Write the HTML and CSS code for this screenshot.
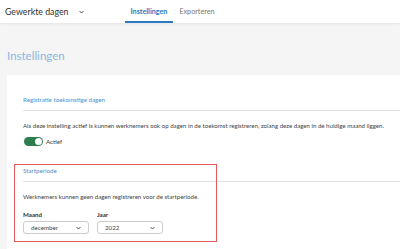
FILE: index.html
```html
<!DOCTYPE html>
<html>

<head>
  <meta charset="UTF-8">
  <title>Gewerkte dagen - Instellingen</title>
  <link rel="stylesheet" href="styles.css">
</head>

<body>
  <div class="topbar">
    <div class="app-title">
      Gewerkte dagen
      <svg class="chevron" viewBox="0 0 10 6" width="5" height="4"><path d="M1 1 L5 5 L9 1" fill="none" stroke="#444" stroke-width="1.8"/></svg>
    </div>
    <div class="tabs">
      <a class="tab active">Instellingen</a>
      <a class="tab">Exporteren</a>
    </div>
  </div>

  <div class="page">
    <h1 class="page-title">Instellingen</h1>

    <div class="card">
      <div class="setting">
        <h2 class="setting-title">Registratie toekomstige dagen</h2>
        <p class="setting-text">Als deze instelling actief is kunnen werknemers ook op dagen in de toekomst registreren, zolang deze dagen in de huidige maand liggen.</p>
        <div class="toggle-row">
          <span class="toggle"><span class="knob"></span></span>
          <span class="toggle-label">Actief</span>
        </div>
      </div>

      <div class="setting marked">
        <div class="highlight"></div>
        <h2 class="setting-title">Startperiode</h2>
        <p class="setting-text">Werknemers kunnen geen dagen registreren voor de startperiode.</p>
        <div class="fields">
          <div class="field">
            <label for="maand">Maand</label>
            <div class="select" id="maand">december
              <svg viewBox="0 0 10 6" width="5" height="4"><path d="M1 1 L5 5 L9 1" fill="none" stroke="#444" stroke-width="1.8"/></svg>
            </div>
          </div>
          <div class="field">
            <label for="jaar">Jaar</label>
            <div class="select" id="jaar">2022
              <svg viewBox="0 0 10 6" width="5" height="4"><path d="M1 1 L5 5 L9 1" fill="none" stroke="#444" stroke-width="1.8"/></svg>
            </div>
          </div>
        </div>
      </div>
    </div>
  </div>
</body>
</html>
```

FILE: styles.css
```css
body {
  margin: 0;
  font-family: Lato, "Open Sans", sans-serif;
  background-color: #f5f5f5;
  color: #444;
  overflow: hidden;
  height: 249px;
  display: flex;
  flex-direction: column;
}

.topbar {
  display: flex;
  align-items: center;
  flex-shrink: 0;
  height: 23px;
  background-color: #fff;
  box-shadow: 0 1px 3px rgba(0, 0, 0, 0.07);
  position: relative;
}

.app-title {
  display: flex;
  align-items: center;
  gap: 10px;
  padding-left: 5px;
  font-size: 8.8px;
  color: #333;
}

.tabs {
  display: flex;
  margin-left: 41px;
  height: 100%;
}

.tab {
  display: flex;
  align-items: center;
  padding: 2px 6px 0;
  font-size: 7.2px;
  color: #777;
  border-bottom: 2px solid transparent;
  box-sizing: border-box;
}

.tab.active {
  color: #2a7bc4;
  font-weight: bold;
  border-bottom-color: #2a7bc4;
}

.page {
  flex: 1;
  display: flex;
  flex-direction: column;
  padding-left: 7px;
  min-height: 0;
}

.page-title {
  margin: 0;
  padding-top: 26px;
  padding-bottom: 12px;
  font-size: 11.5px;
  font-weight: normal;
  color: #8ab5e0;
  line-height: 14px;
}

.card {
  flex: 1;
  background-color: #fff;
  padding: 21px 0 0 16px;
  overflow: hidden;
}

.setting {
  position: relative;
}

.setting-title {
  margin: 0;
  padding-bottom: 6px;
  font-size: 6.2px;
  line-height: 8px;
  font-weight: normal;
  color: #4a8fd0;
  border-bottom: 1px solid #e2e2e2;
}

.setting-text {
  margin: 11px 0 7px;
  font-size: 6.1px;
  line-height: 8px;
  color: #444;
  white-space: nowrap;
}

.toggle-row {
  display: flex;
  align-items: center;
  gap: 3px;
  height: 9px;
  padding-left: 1px;
  font-size: 6.2px;
  margin-bottom: 21px;
}

.toggle {
  display: flex;
  justify-content: flex-end;
  align-items: center;
  width: 19px;
  height: 9px;
  border-radius: 5px;
  background-color: #2e7d4f;
  padding: 1px;
  box-sizing: border-box;
}

.knob {
  width: 7px;
  height: 7px;
  border-radius: 50%;
  background-color: #fff;
}

.highlight {
  position: absolute;
  left: -9px;
  top: -3px;
  width: 203px;
  height: 78px;
  border: 1.5px solid #e55b5b;
  box-sizing: border-box;
}

.fields {
  display: flex;
  gap: 8px;
  margin-top: 10px;
}

.field {
  display: flex;
  flex-direction: column;
  gap: 2px;
}

label {
  font-size: 6.2px;
  line-height: 8px;
  font-weight: bold;
  color: #333;
}

.select {
  display: flex;
  justify-content: space-between;
  align-items: center;
  width: 66px;
  height: 13px;
  padding: 0 7px;
  box-sizing: border-box;
  border: 1px solid #ccc;
  border-radius: 3px;
  font-size: 6.2px;
  color: #444;
}
```
